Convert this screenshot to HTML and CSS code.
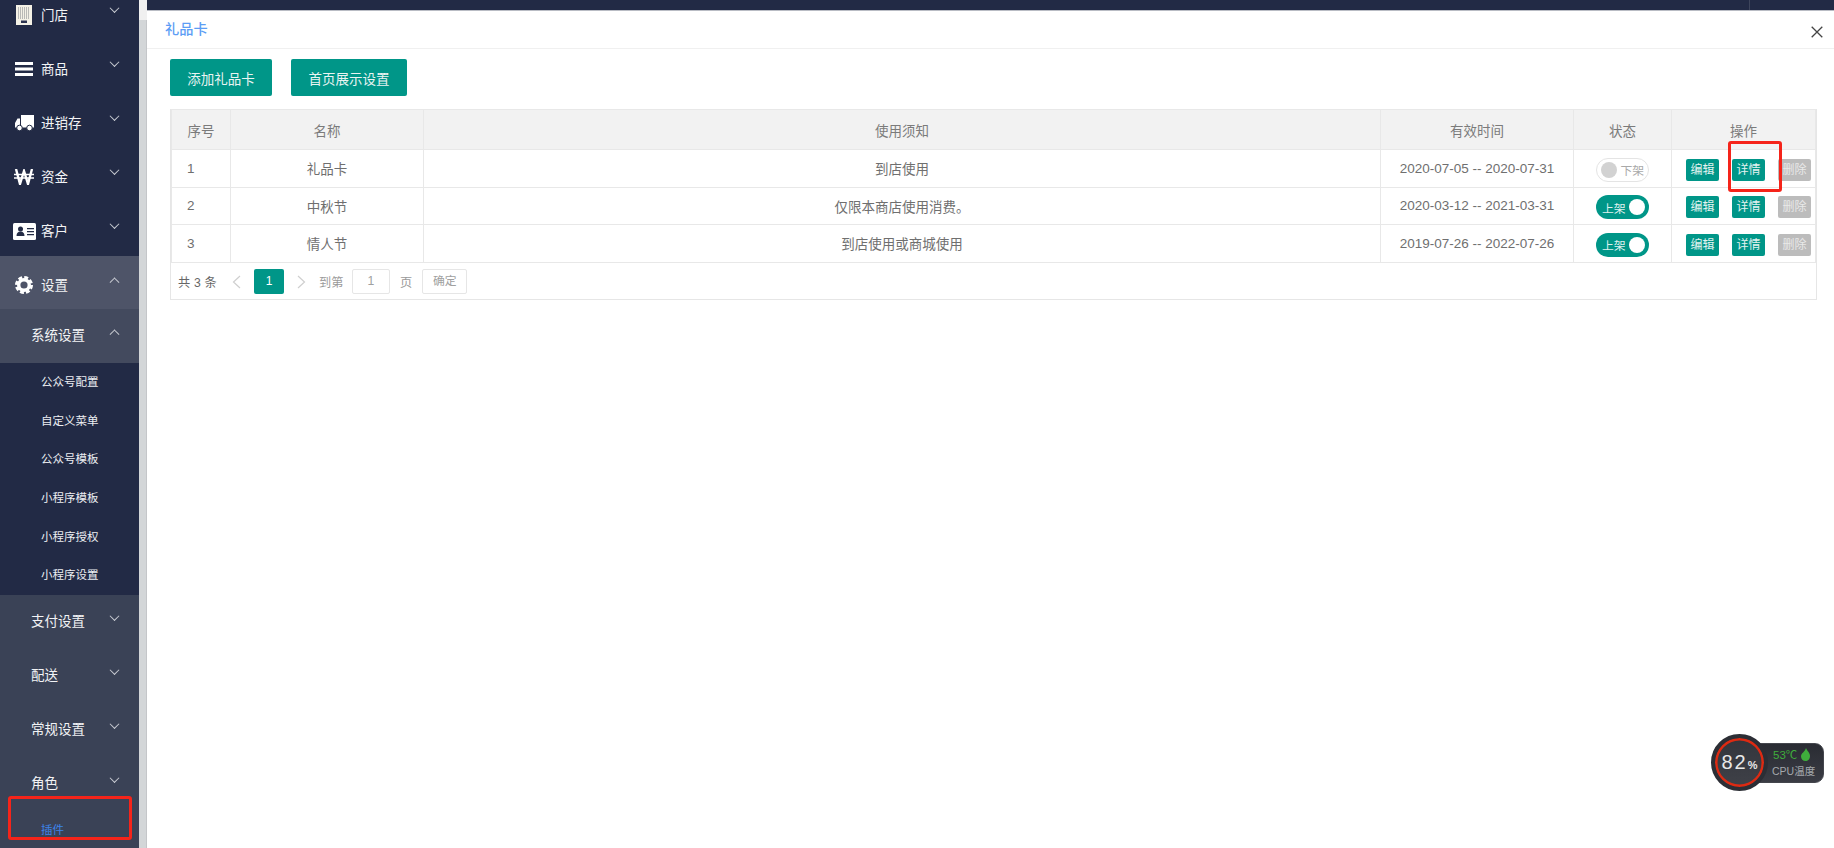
FILE: index.html
```html
<!DOCTYPE html>
<html lang="zh-CN">
<head>
<meta charset="utf-8">
<title>礼品卡</title>
<link rel="stylesheet" href="styles.css">
</head>
<body>
<div class="app">
  <nav class="sidebar">
    <div class="menu">
      <a class="row"><span class="ico"><svg width="18" height="20" viewBox="0 0 18 20"><path fill="#f4f1e6" d="M1 0h16v20H1z"/><path fill="none" stroke="#b9b9b6" stroke-width="12" stroke-dasharray="1 1" d="M3 8h12"/><path fill="#2c3350" d="M6 15.500h6V18H6z"/></svg></span><span class="label">门店</span><i class="chev"></i></a>
      <a class="row"><span class="ico"><svg width="18" height="14" viewBox="0 0 18 14"><path fill="#fff" d="M0 0h18v3H0zM0 5.500h18v3H0zM0 11h18v3H0z"/></svg></span><span class="label">商品</span><i class="chev"></i></a>
      <a class="row"><span class="ico"><svg width="19" height="16" viewBox="0 0 19 16"><path fill="#fff" d="M6 0h13v12.500H6zM5 3.500v9H0V8l2.500-4.500z"/><circle cx="4.500" cy="13" r="2.800" fill="#fff" stroke="#232b45"/><circle cx="14.500" cy="13" r="2.800" fill="#fff" stroke="#232b45"/></svg></span><span class="label">进销存</span><i class="chev"></i></a>
      <a class="row"><span class="ico"><svg width="20" height="16" viewBox="0 0 20 16"><path fill="none" stroke="#fff" stroke-width="2.400" d="M2 0l4 15L10 2l4 13 4-15"/><path fill="none" stroke="#fff" stroke-width="1.600" d="M0 5.500h20M0 9h20"/></svg></span><span class="label">资金</span><i class="chev"></i></a>
      <a class="row"><span class="ico"><svg width="23" height="17" viewBox="0 0 23 17"><rect width="23" height="17" rx="1.500" fill="#fff"/><circle cx="7.500" cy="6" r="2.500" fill="#232b45"/><path fill="#232b45" d="M3.500 13c0-3 1.500-4.500 4-4.500s4 1.500 4 4.500zM14 5h7v1.300h-7zM14 8h7v1.300h-7zM14 11h7v1.300h-7z"/></svg></span><span class="label">客户</span><i class="chev"></i></a>
      <a class="row row-open"><span class="ico"><svg width="18" height="18" viewBox="0 0 18 18"><circle cx="9" cy="9" r="5.300" fill="none" stroke="#fff" stroke-width="3.400"/><circle cx="9" cy="9" r="7.600" fill="none" stroke="#fff" stroke-width="2.800" stroke-dasharray="3.900 2.070"/></svg></span><span class="label">设置</span><i class="chev up"></i></a>
      <a class="row row-sub row-sub-open"><span class="label">系统设置</span><i class="chev up"></i></a>
      <ul class="leaves">
        <li class="leaf">公众号配置</li>
        <li class="leaf">自定义菜单</li>
        <li class="leaf">公众号模板</li>
        <li class="leaf">小程序模板</li>
        <li class="leaf">小程序授权</li>
        <li class="leaf">小程序设置</li>
      </ul>
      <div class="lower">
        <a class="row row-sub"><span class="label">支付设置</span><i class="chev"></i></a>
        <a class="row row-sub"><span class="label">配送</span><i class="chev"></i></a>
        <a class="row row-sub"><span class="label">常规设置</span><i class="chev"></i></a>
        <a class="row row-sub"><span class="label">角色</span><i class="chev"></i></a>
        <div class="leaf leaf-active">插件</div>
      </div>
    </div>
  </nav>
  <div class="gutter"><div class="thumb"></div></div>
  <main class="main">
    <div class="topbar"><span class="topbar-sep"></span></div>
    <header class="title-bar">
      <span class="title">礼品卡</span>
      <svg class="close" width="12" height="12" viewBox="0 0 12 12"><path fill="none" stroke="#444" stroke-width="1.300" d="M.7.700l10.600 10.600M11.300.700L.7 11.300"/></svg>
    </header>
    <section class="content">
      <div class="toolbar">
        <button class="btn btn-a">添加礼品卡</button>
        <button class="btn btn-b">首页展示设置</button>
      </div>
      <div class="table-box">
        <table class="grid">
          <colgroup>
            <col class="c1"><col class="c2"><col class="c3"><col class="c4"><col class="c5"><col class="c6">
          </colgroup>
          <thead>
            <tr><th>序号</th><th>名称</th><th>使用须知</th><th>有效时间</th><th>状态</th><th>操作</th></tr>
          </thead>
          <tbody>
            <tr>
              <td class="num">1</td><td>礼品卡</td><td>到店使用</td><td>2020-07-05 -- 2020-07-31</td>
              <td><span class="switch off"><i class="knob"></i><em>下架</em></span></td>
              <td class="ops"><span class="mini">编辑</span><span class="mini">详情</span><span class="mini gray">删除</span></td>
            </tr>
            <tr>
              <td class="num">2</td><td>中秋节</td><td>仅限本商店使用消费。</td><td>2020-03-12 -- 2021-03-31</td>
              <td><span class="switch on"><em>上架</em><i class="knob"></i></span></td>
              <td class="ops"><span class="mini">编辑</span><span class="mini">详情</span><span class="mini gray">删除</span></td>
            </tr>
            <tr>
              <td class="num">3</td><td>情人节</td><td>到店使用或商城使用</td><td>2019-07-26 -- 2022-07-26</td>
              <td><span class="switch on"><em>上架</em><i class="knob"></i></span></td>
              <td class="ops"><span class="mini">编辑</span><span class="mini">详情</span><span class="mini gray">删除</span></td>
            </tr>
          </tbody>
        </table>
        <div class="pager">
          <span class="total">共 3 条</span>
          <svg class="arrow prev" width="9" height="14" viewBox="0 0 9 14"><path fill="none" stroke="#cfcfcf" stroke-width="1.200" d="M8 1L1.500 7 8 13"/></svg>
          <span class="page">1</span>
          <svg class="arrow next" width="9" height="14" viewBox="0 0 9 14"><path fill="none" stroke="#cfcfcf" stroke-width="1.200" d="M1 1l6.500 6L1 13"/></svg>
          <span class="pg-text goto">到第</span>
          <span class="pg-input">1</span>
          <span class="pg-text unit">页</span>
          <span class="pg-ok">确定</span>
        </div>
      </div>
    </section>
  </main>
</div>

<div class="mark mark-detail"></div>
<div class="mark mark-plugin"></div>

<aside class="cpu">
  <div class="cpu-pill">
    <div class="cpu-temp">53℃<svg width="9" height="13" viewBox="0 0 9 13"><path fill="#3fae3c" d="M5 0c1 3 4 4.500 4 8 0 3-2 5-4.500 5S0 11 0 8.500C0 5 4 4 5 0z"/></svg></div>
    <div class="cpu-name">CPU温度</div>
  </div>
  <div class="cpu-dial"><span class="cpu-val">82<small>%</small></span></div>
</aside>
</body>
</html>
```
FILE: styles.css
```css
* { box-sizing: border-box; }
html, body { margin: 0; height: 100%; overflow: hidden; background: #fff; }
body {
  font-family: "Liberation Sans", "Noto Sans CJK SC", sans-serif;
  font-size: 13.5px;
  color: #666;
}
ul { list-style: none; margin: 0; padding: 0; }
em, i { font-style: normal; }

.app { display: flex; height: 848px; }

/* sidebar */
.sidebar { width: 139px; flex: none; background: #222a45; overflow: hidden; }
.menu { margin-top: -14px; }
.row {
  display: flex;
  align-items: center;
  height: 54px;
  padding: 2px 0 0 13px;
  color: #f2f3f5;
  font-size: 13.5px;
}
.ico { width: 28px; flex: none; display: flex; justify-content: center; padding-right: 6px; margin-top: 2px; }
.ico svg { display: block; flex: none; }
.label { flex: 1; }
.chev {
  width: 7px;
  height: 7px;
  margin: 0 21px 9px 0;
  border-right: 1px solid #c9ccd3;
  border-bottom: 1px solid #c9ccd3;
  transform: rotate(45deg) translate(-1px, -1px);
}
.chev.up { transform: rotate(225deg) translate(-2px, -2px); }
.row-open { background: #4e5468; height: 53px; }
.row-sub { padding: 0 0 4px 31px; }
.row-sub .chev { margin-bottom: 5px; }
.row-sub-open { background: #434a5e; }
.leaves { height: 232px; }
.leaf {
  height: 38.660px;
  line-height: 38.660px;
  padding-left: 41px;
  font-size: 11.500px;
  color: #eceef2;
}
.lower { background: #3a4256; height: 260px; }
.leaf-active { color: #3d82e8; }

.gutter { width: 8px; flex: none; background: #f0f0f0; }
.thumb { margin-top: 20px; height: 828px; background: #d3d6d8; border-right: 1px solid #c4c6c9; }

/* main */
.main { flex: 1; min-width: 0; display: flex; flex-direction: column; }
.topbar {
  height: 11px;
  flex: none;
  background: #222a45;
  border-bottom: 1px solid #b9bcc4;
  display: flex;
  justify-content: flex-end;
  padding-right: 84px;
}
.topbar-sep { width: 1px; background: #3e455c; }
.title-bar {
  height: 38px;
  flex: none;
  display: flex;
  align-items: center;
  justify-content: space-between;
  padding: 0 11px 0 18px;
  border-bottom: 1px solid #f0f0f0;
}
.title { color: #5c9df5; font-size: 14.200px; font-weight: 500; margin-bottom: 3px; }
.close { display: block; margin-top: 4px; }
.content { padding: 10px 17px 0 23px; }
.toolbar { display: flex; gap: 19px; }
.btn {
  height: 37px;
  padding: 0;
  border: 0;
  border-radius: 2px;
  background: #009688;
  color: #e9f4f2;
  font: inherit;
  font-size: 13.500px;
}
.btn-a { width: 102px; }
.btn-b { width: 116px; }

.table-box { margin-top: 13px; border: 1px solid #e6e6e6; border-top: 0; height: 191px; }
.grid { width: 100%; border-collapse: collapse; table-layout: fixed; }
.c1 { width: 59px; }
.c2 { width: 193px; }
.c3 { width: 957px; }
.c4 { width: 193px; }
.c5 { width: 98px; }
.grid th, .grid td {
  border: 1px solid #e8e8e8;
  text-align: center;
  padding: 0;
  font-weight: 400;
  font-size: 13.500px;
  color: #6f6f6f;
}
.grid th { height: 40px; background: #f2f2f2; color: #7b7b7b; }
.grid td { height: 37.500px; }
.grid td.num { text-align: left; padding-left: 15px; }

.switch {
  display: inline-flex;
  align-items: center;
  justify-content: space-between;
  width: 53px;
  height: 24px;
  margin-top: 2.500px;
  border-radius: 12px;
  font-size: 11.800px;
  vertical-align: middle;
  padding: 0 4px 0 6px;
}
.switch.on { background: #009688; color: #dff1ef; }
.switch.off { background: #fff; border: 1.500px solid #e4e4e4; color: #a9a9a9; padding: 0 4px 0 4px; }
.knob { width: 16px; height: 16px; border-radius: 50%; background: #fff; flex: none; }
.off .knob { background: #d2d2d2; }

td.ops { text-align: left; padding-left: 14px; font-size: 0; }
.mini {
  display: inline-block;
  width: 33px;
  height: 22px;
  line-height: 22px;
  margin: 2.500px 13px 0 0;
  text-align: center;
  font-size: 12px;
  border-radius: 2px;
  background: #009688;
  color: #e4f3f1;
  vertical-align: middle;
}
.mini:last-child { margin-right: 0; }
.mini.gray { background: #bcbcbc; color: #e9e9e9; }

.pager { display: flex; align-items: center; height: 38px; padding: 0 0 0 7px; font-size: 12.200px; color: #666; }
.total { width: 51px; letter-spacing: .2px; }
.arrow { display: block; flex: none; }
.prev { margin: 0 13px 0 3px; }
.page {
  width: 30px;
  height: 25px;
  line-height: 25px;
  text-align: center;
  background: #009688;
  color: #fff;
  border-radius: 2px;
  font-size: 12px;
}
.next { margin: 0 13px 0 13px; }
.pg-text { color: #9a9a9a; }
.goto { width: 33px; }
.pg-input, .pg-ok {
  height: 25px;
  line-height: 23px;
  text-align: center;
  border: 1px solid #e6e6e6;
  border-radius: 2px;
  color: #a0a0a0;
}
.pg-input { width: 38px; }
.unit { margin: 0 10px; }
.pg-ok { width: 45px; font-size: 11.800px; }

/* annotations over the page */
.mark { position: absolute; border: 3px solid #f5241a; border-radius: 3px; }
.mark-detail { left: 1728px; top: 141px; width: 54px; height: 51px; }
.mark-plugin { left: 8px; top: 796px; width: 124px; height: 44px; }

/* floating CPU widget */
.cpu { position: absolute; left: 1711px; top: 734px; width: 113px; height: 57px; }
.cpu-pill {
  position: absolute;
  right: 0;
  top: 9px;
  width: 70px;
  height: 40px;
  padding-left: 17px;
  border-radius: 0 9px 9px 0;
  background: linear-gradient(#2a2c33, #3a3c44);
  border: 1px solid #44464d;
}
.cpu-temp {
  display: flex;
  align-items: center;
  gap: 4px;
  height: 20px;
  color: #3fae3c;
  font-size: 11.500px;
  padding-left: 1px;
}
.cpu-name { color: #a4a8ad; font-size: 10.500px; line-height: 14px; white-space: nowrap; }
.cpu-dial {
  position: absolute;
  left: 0;
  top: 0;
  width: 57px;
  height: 57px;
  border-radius: 50%;
  background: linear-gradient(#33353c, #3f4148);
  border: 4px solid #2c2e35;
  box-shadow: inset 0 0 0 2.500px #dd2a12;
  display: flex;
  align-items: center;
  justify-content: center;
}
.cpu-val { color: #e8e8e8; font-size: 20px; letter-spacing: 2px; }
.cpu-val small { font-size: 11px; letter-spacing: 0; font-weight: 700; }
```
